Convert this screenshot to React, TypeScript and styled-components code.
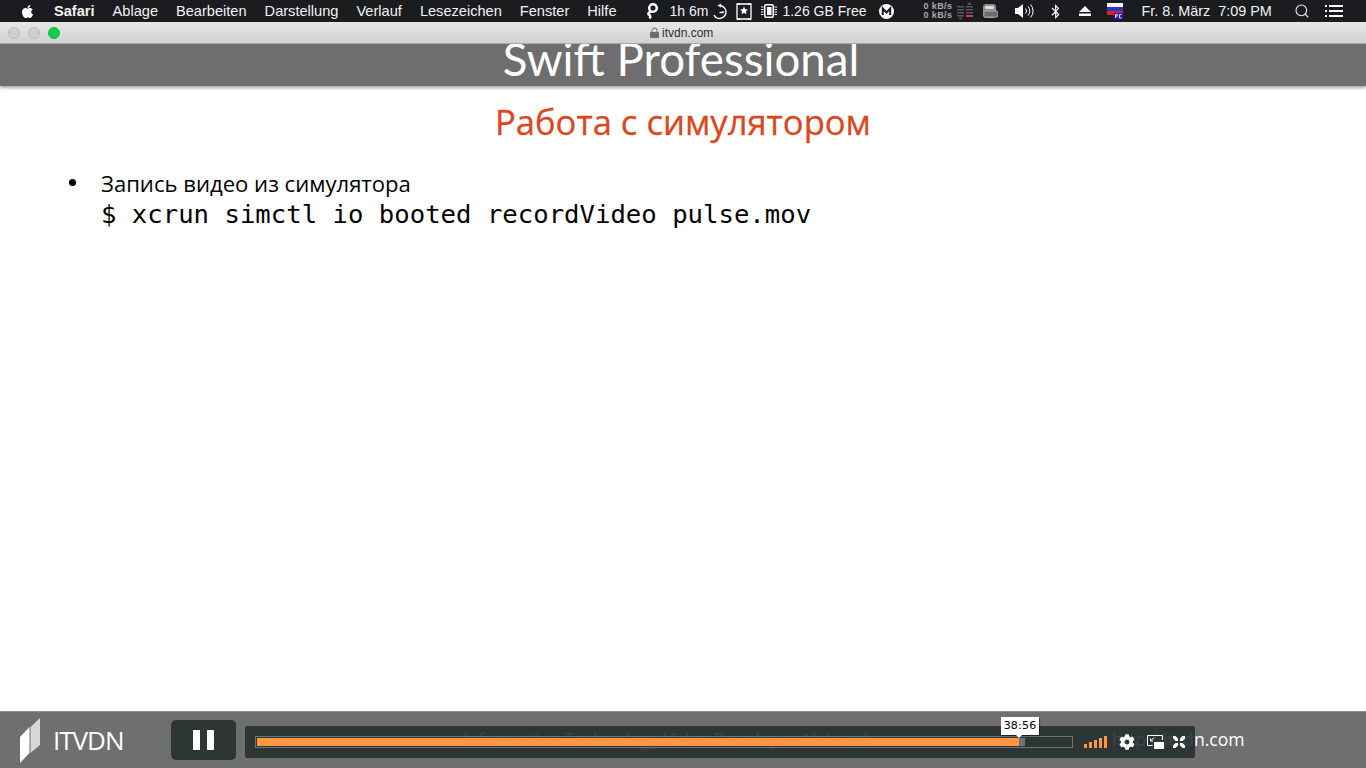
import styled, { createGlobalStyle } from "styled-components";
import { FaApple, FaBluetoothB, FaCog } from "react-icons/fa";
import { Search } from "lucide-react";

const GlobalStyle = createGlobalStyle`
  html, body {
    margin: 0;
    height: 100%;
    overflow: hidden;
    background: #fff;
  }
`;

const Screen = styled.div`
  width: 1366px;
  height: 768px;
  display: flex;
  flex-direction: column;
  overflow: hidden;
`;

const MenuBar = styled.header`
  height: 22px;
  flex: none;
  display: flex;
  align-items: center;
  background: #1b1c20;
  color: #f2f2f2;
  font: 14px "Liberation Sans", Arial, sans-serif;
  white-space: nowrap;
`;

const AppleSlot = styled.span`
  display: flex;
  margin: 0 19px 0 20px;
  font-size: 15px;
  color: #fff;
`;

const MenuList = styled.nav`
  display: flex;
  gap: 18px;
  font-size: 14.6px;
`;

const MenuItem = styled.span<{ $active?: boolean }>`
  font-weight: ${(p) => (p.$active ? 700 : 400)};
`;

const StatusItem = styled.span<{ $left: number; $width?: number }>`
  display: flex;
  align-items: center;
  justify-content: center;
  margin-left: ${(p) => p.$left}px;
  ${(p) => (p.$width ? `width: ${p.$width}px;` : "")}
  height: 22px;
`;

const Clock = styled(StatusItem)`
  font-size: 14.4px;
`;

const NetStats = styled.span`
  display: flex;
  flex-direction: column;
  font: 700 9px/9px "Liberation Sans", Arial, sans-serif;
  color: #a9a9ab;
  letter-spacing: 0.4px;
`;

const TitleBar = styled.div`
  height: 21px;
  flex: none;
  display: flex;
  align-items: center;
  padding-left: 8px;
  gap: 8px;
  position: relative;
  z-index: 2;
  background: linear-gradient(#e8e7e8, #d2d1d2);
  border-bottom: 1px solid #a8a8a8;
`;

const Light = styled.span<{ $on?: boolean }>`
  width: 12px;
  height: 12px;
  border-radius: 50%;
  box-sizing: border-box;
  background: ${(p) => (p.$on ? "#10ce45" : "#cfcfcf")};
  border: 1px solid ${(p) => (p.$on ? "#10c040" : "#bdbdbd")};
`;

const Address = styled.div`
  display: flex;
  align-items: center;
  gap: 3px;
  margin-left: 582px;
  color: #303030;
  font: 12px "Liberation Sans", Arial, sans-serif;
`;

const SlideHeader = styled.div`
  height: 42px;
  flex: none;
  display: flex;
  justify-content: center;
  align-items: flex-end;
  background: #6e6e6e;
  box-shadow: 0 2px 3px rgba(0, 0, 0, 0.35);
  overflow: hidden;
  position: relative;
  z-index: 1;
`;

const SlideName = styled.h1`
  margin: 0 0 2px;
  color: #fff;
  font: 400 45.700px/50px Lato, "Open Sans", sans-serif;
  white-space: nowrap;
  transform: translateX(-2px);
`;

const Slide = styled.main`
  flex: 1;
  background: #fff;
  padding-top: 13px;
`;

const SlideTitle = styled.h2`
  margin: 0;
  text-align: center;
  color: #d9481f;
  font: 400 34.600px/46px "Open Sans", Lato, sans-serif;
  -webkit-text-stroke: 0.3px #d9481f;
`;

const Bullets = styled.ul`
  list-style: none;
  margin: 23px 0 0;
  padding: 0 0 0 69px;
  display: flex;
`;

const BulletDot = styled.span`
  width: 7px;
  height: 7px;
  margin: 11px 25px 0 0;
  flex: none;
  border-radius: 50%;
  background: #000;
`;

const BulletText = styled.li`
  color: #000;
  font: 400 22.100px/30px "Open Sans", Lato, sans-serif;
`;

const Code = styled.code`
  display: block;
  margin-top: 1px;
  font: 400 25.650px/31px "DejaVu Sans Mono", monospace;
`;

const Player = styled.footer`
  height: 57px;
  flex: none;
  box-sizing: border-box;
  position: relative;
  display: flex;
  align-items: center;
  background: #6f6f6f;
  border-top: 1px solid #8c8c8c;
  padding: 6px 0 0 20px;
`;

const Watermark = styled.span<{ $left: number }>`
  position: absolute;
  left: ${(p) => p.$left}px;
  top: 15px;
  color: #fff;
  font: 400 17.600px/24px "Open Sans", sans-serif;
  white-space: nowrap;
`;

const Brand = styled.div`
  display: flex;
  align-items: center;
  gap: 13px;
  width: 151px;
  flex: none;
  margin-top: -6px;
  position: relative;
`;

const BrandName = styled.span`
  color: #fff;
  font: 400 26px/30px "Open Sans", sans-serif;
  letter-spacing: -1px;
`;

const PauseButton = styled.button`
  width: 65px;
  height: 40px;
  flex: none;
  padding: 0;
  margin: -6px 9px 0 0;
  border: 0;
  border-radius: 5px;
  background: #2d3635;
  display: flex;
  justify-content: center;
  align-items: center;
  gap: 7px;
  position: relative;
`;

const PauseBar = styled.span`
  width: 7px;
  height: 20px;
  background: #fff;
`;

const Controls = styled.div`
  width: 950px;
  height: 32px;
  flex: none;
  box-sizing: border-box;
  padding: 0 0 0 10px;
  display: flex;
  align-items: center;
  position: relative;
  border-radius: 2px;
  background: rgba(38, 48, 47, 0.9);
  margin-top: -2px;
`;

const Track = styled.div`
  width: 818px;
  height: 12px;
  flex: none;
  box-sizing: border-box;
  border: 1px solid #6e7473;
  padding: 1px;
  display: flex;
  position: relative;
`;

const Fill = styled.div<{ $color: string }>`
  height: 100%;
  background: ${(p) => p.$color};
`;

const TimeTip = styled.div`
  position: absolute;
  left: 745px;
  top: -20px;
  width: 38px;
  height: 18px;
  background: #fff;
  color: #000;
  font: 11px/18px "DejaVu Sans", sans-serif;
  letter-spacing: 0.2px;
  text-align: center;
  box-shadow: 1px 1px 1px rgba(0, 0, 0, 0.4);

  &::after {
    content: "";
    position: absolute;
    left: 15px;
    top: 18px;
    border: 3px solid transparent;
    border-top-color: #fff;
    border-bottom: 0;
  }
`;

const Signal = styled.div`
  display: flex;
  align-items: flex-end;
  gap: 2px;
  margin-left: 11px;
  height: 12px;
`;

const SignalBar = styled.span<{ $height: number }>`
  width: 3px;
  height: ${(p) => p.$height}px;
  background: #ff9640;
`;

const ControlIcon = styled.span<{ $left: number }>`
  display: flex;
  margin-left: ${(p) => p.$left}px;
  color: #fff;
`;

const Body = () => (
  <Bullets>
    <BulletDot />
    <BulletText>
      Запись видео из симулятора
      <Code>$ xcrun simctl io booted recordVideo pulse.mov</Code>
    </BulletText>
  </Bullets>
);

const menus = ["Ablage", "Bearbeiten", "Darstellung", "Verlauf", "Lesezeichen", "Fenster", "Hilfe"];

function App() {
  return (
    <Screen>
      <GlobalStyle />
      <MenuBar>
        <AppleSlot>
          <FaApple />
        </AppleSlot>
        <MenuList>
          <MenuItem $active>Safari</MenuItem>
          {menus.map((m) => (
            <MenuItem key={m}>{m}</MenuItem>
          ))}
        </MenuList>
        <StatusItem $left={29} $width={14}>
          <svg width="13" height="18" viewBox="0 0 13 18" fill="none" stroke="#fff" strokeWidth="2.500">
            <circle cx="7" cy="6" r="3.800" />
            <path d="M5 9.500c-2.500 1-3.500 2.500-1.500 3.500 1 .5 1 2 0 3.500" />
          </svg>
        </StatusItem>
        <StatusItem $left={10}>1h 6m</StatusItem>
        <StatusItem $left={4.500}>
          <svg width="17" height="17" viewBox="0 0 17 17" fill="none" stroke="#fff" strokeWidth="1.400">
            <path d="M6.500 2.500a6.500 6.500 0 1 1 0 13c-2.500 0-4.500-1.500-5.500-3.500" />
            <path d="M6.500 9.500h3.500V8" />
            <path d="M8 .5 4.500 2.500 8 4.500z" fill="#fff" stroke="none" />
          </svg>
        </StatusItem>
        <StatusItem $left={6.500}>
          <svg width="16" height="17" viewBox="0 0 16 17" fill="none" stroke="#fff" strokeWidth="1.300">
            <path d="M4 1H1v15h3M12 1h3v15h-3" />
            <path d="M1 1h14M1 16h14" />
            <path d="M8 3.500 9.200 6.200l2.800.3-2.100 1.900.6 2.800L8 9.800l-2.500 1.400.6-2.800L4 6.500l2.800-.3z" fill="#fff" stroke="none" />
          </svg>
        </StatusItem>
        <StatusItem $left={9}>
          <svg width="16" height="16" viewBox="0 0 16 16" fill="#fff">
            <path fillRule="evenodd" d="M5 1h6a2 2 0 0 1 2 2v10a2 2 0 0 1-2 2H5a2 2 0 0 1-2-2V3a2 2 0 0 1 2-2zm0 1.500a.5.5 0 0 0-.5.5v10a.5.5 0 0 0 .5.5h6a.5.5 0 0 0 .5-.5V3a.5.5 0 0 0-.5-.5z" />
            <rect x="6" y="4" width="4.500" height="8" />
            <path d="M0 3.500h2.500v1H0zM0 6h2.500v1H0zM0 8.500h2.500v1H0zM0 11h2.500v1H0zM13.500 3.500H16v1h-2.500zM13.500 6H16v1h-2.500zM13.500 8.500H16v1h-2.500zM13.500 11H16v1h-2.500z" />
          </svg>
        </StatusItem>
        <StatusItem $left={5}>1.26 GB Free</StatusItem>
        <StatusItem $left={12.500}>
          <svg width="15" height="15" viewBox="0 0 15 15">
            <circle cx="7.500" cy="7.500" r="7.500" fill="#fff" />
            <path d="M3.800 11V4.500l3.700 4 3.700-4V11" fill="none" stroke="#1b1c20" strokeWidth="2" />
          </svg>
        </StatusItem>
        <StatusItem $left={29.500}>
          <NetStats>
            <span>0 kB/s</span>
            <span>0 kB/s</span>
          </NetStats>
        </StatusItem>
        <StatusItem $left={5}>
          <svg width="16" height="18" viewBox="0 0 16 18">
            <path d="M0 4h7v1.500H0zM0 7h7v1.500H0zM0 10h7v1.500H0zM0 13h7v1.500H0zM9 4h7v1.500H9zM9 7h7v1.500H9zM9 10h7v1.500H9z" fill="#55565a" />
            <path d="M3.500 18 1 15.500h5zM12.500 0 15 3h-5z" fill="#55565a" />
            <path d="M9 13h7v2H9z" fill="#e8304a" />
          </svg>
        </StatusItem>
        <StatusItem $left={9}>
          <svg width="16" height="16" viewBox="0 0 16 16">
            <rect x="1" y="1" width="13" height="14" rx="3" fill="#8e8e8e" />
            <rect x="3" y="3" width="9" height="3" rx="1" fill="#dcdcdc" />
            <rect x="2" y="8" width="14" height="6" rx="1.500" fill="#6c6c6c" stroke="#a8a8a8" />
          </svg>
        </StatusItem>
        <StatusItem $left={17}>
          <svg width="20" height="16" viewBox="0 0 20 16" fill="none" stroke="#fff" strokeWidth="1">
            <path d="M0 5h3l5-4v14l-5-4H0z" fill="#fff" stroke="none" />
            <path d="M10.500 5.500a3.500 3.500 0 0 1 0 5M13 3.500a6.500 6.500 0 0 1 0 9M15.500 1.500a9.500 9.500 0 0 1 0 13" />
          </svg>
        </StatusItem>
        <StatusItem $left={13}>
          <FaBluetoothB size={15} />
        </StatusItem>
        <StatusItem $left={16}>
          <svg width="12" height="10" viewBox="0 0 12 10" fill="#fff">
            <path d="M6 0l6 6H0zM0 7.500h12V10H0z" />
          </svg>
        </StatusItem>
        <StatusItem $left={16}>
          <svg width="16" height="16" viewBox="0 0 16 16">
            <rect y="0" width="16" height="4" fill="#f4f4f4" />
            <rect y="4" width="16" height="4" fill="#2b36c8" />
            <rect y="8" width="16" height="4" fill="#e01c24" />
            <rect x="7" y="10" width="9" height="6" fill="#2a18c8" />
            <path d="M8.500 15v-3.500h1.800v1.700H8.500M14.500 11.500h-2v3.500h2" fill="none" stroke="#fff" strokeWidth="0.800" />
          </svg>
        </StatusItem>
        <Clock $left={18}>Fr. 8. März&nbsp; 7:09 PM</Clock>
        <StatusItem $left={22}>
          <Search size={16} strokeWidth={1.600} />
        </StatusItem>
        <StatusItem $left={15}>
          <svg width="18" height="12" viewBox="0 0 18 12" fill="#fff">
            <path d="M0 0h2v2H0zM4 0h14v2H4zM0 5h2v2H0zM4 5h14v2H4zM0 10h2v2H0zM4 10h14v2H4z" />
          </svg>
        </StatusItem>
      </MenuBar>

      <TitleBar>
        <Light />
        <Light />
        <Light $on />
        <Address>
          <svg width="9" height="11" viewBox="0 0 9 11">
            <path d="M2 5V3.500a2.500 2.500 0 0 1 5 0V5" fill="none" stroke="#6d6d6d" />
            <rect y="5" width="9" height="6" rx="1" fill="#6d6d6d" />
          </svg>
          itvdn.com
        </Address>
      </TitleBar>

      <SlideHeader>
        <SlideName>Swift Professional</SlideName>
      </SlideHeader>

      <Slide>
        <SlideTitle>Работа с симулятором</SlideTitle>
        <Body />
      </Slide>

      <Player>
        <Watermark $left={463}>Information Technology Video Developer Network</Watermark>
        <Watermark $left={1112}>http://itvdn.com</Watermark>
        <Brand>
          <svg width="20" height="45" viewBox="0 0 20 45">
            <path d="M0 19 9.500 9v26L0 45z" fill="#fff" />
            <path d="M10.500 9 20 0v27l-9.500 8z" fill="#d8d8d8" />
          </svg>
          <BrandName>ITVDN</BrandName>
        </Brand>
        <PauseButton>
          <PauseBar />
          <PauseBar />
        </PauseButton>
        <Controls>
          <Track>
            <Fill $color="#ff9640" style={{ width: 762 }} />
            <Fill $color="#6e7473" style={{ width: 6 }} />
            <TimeTip>38:56</TimeTip>
          </Track>
          <Signal>
            {[4, 6, 8, 10, 12].map((h) => (
              <SignalBar key={h} $height={h} />
            ))}
          </Signal>
          <ControlIcon $left={12}>
            <FaCog size={16} />
          </ControlIcon>
          <ControlIcon $left={12}>
            <svg width="17" height="14" viewBox="0 0 17 14" fill="none" stroke="#fff">
              <path d="M15.500 5V.5H.5v10h5" />
              <rect x="7" y="7" width="10" height="7" fill="#fff" stroke="none" />
              <path d="M7 2.500 3.500 6M3.500 3.500V6H6" />
            </svg>
          </ControlIcon>
          <ControlIcon $left={9}>
            <svg width="12" height="12" viewBox="0 0 12 12" fill="#fff">
              <path d="M0 0h2.500L5 2.500V5H2.500L0 2.500zM12 0v2.500L9.500 5H7V2.500L9.500 0zM0 12V9.500L2.500 7H5v2.500L2.500 12zM12 12H9.500L7 9.500V7h2.500L12 9.500z" />
            </svg>
          </ControlIcon>
        </Controls>
      </Player>
    </Screen>
  );
}

export default App;
